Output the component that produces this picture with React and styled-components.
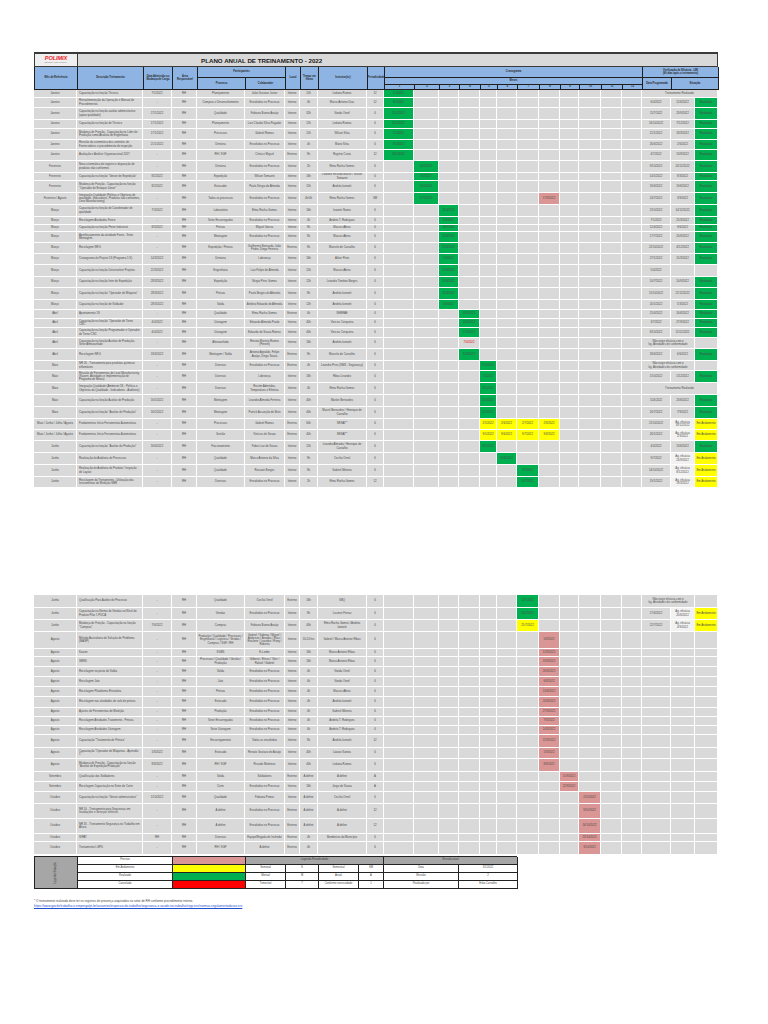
import React from "react";
import styled, { createGlobalStyle } from "styled-components";

const COLS =
  "43px 66px 29px 25px 48px 40px 15px 18px 49px 17px 30px 25px 20px 21px 17px 20px 22px 21px 19px 22px 21px 20px 29px 24px 23px";

const FILL = { g: "#00b050", y: "#ffff00", p: "#da9694", r: "#d9d9d9" };
const MONTHS = [1, 2, 3, 4, 5, 6, 7, 8, 9, 10, 11, 12];

// [mês, descrição, data, processo, colaborador, local, horas, instrutor, periodicidade, altura, meses, situação]
const PAGE1 = [
  ["Janeiro", "Capacitação na função Técnica", "7/1/2022", "Planejamento", "João Gustavo Junior", "Interno", "12h", "Ledana Ramos", "12", 8, "1g", "T"],
  ["Janeiro", "Retroalimentação da Operação e Manual de Procedimentos", "-", "Compras e Desenvolvimento", "Envolvidos no Processo", "Interno", "4h", "Marco Antonio Dias", "12", 10, "1g", "R"],
  ["Janeiro", "Capacitação na função auxiliar administrativo (apoio qualidade)", "17/1/2022", "Qualidade", "Fabiana Bueno Araújo", "Interno", "32h", "Vanda Ornel", "6", 12, "1g", "R"],
  ["Janeiro", "Capacitação na função de Técnico", "17/1/2022", "Planejamento", "Luiz Cláudio Silva Pagador", "Interno", "12h", "Ledana Ramos", "6", 9, "1g", "R"],
  ["Janeiro", "Mudança de Função - Capacitação no Líder de Produção como Analista de Engenharia", "17/1/2022", "Processos", "Gabriel Ramos", "Interno", "12h", "Wilson Silva", "6", 11, "1g", "R"],
  ["Janeiro", "Revisão da sistemática dos controles de Fornecedores e procedimento de inspeção", "21/1/2022", "Diretoria", "Envolvidos no Processo", "Interno", "4h", "Mario Silva", "6", 10, "1g", "R"],
  ["Janeiro", "Avaliação e Análise Organizacional 2017", "-", "RH / SGF", "Cíntia e Miguel", "Externo", "8h", "Rogério Costa", "12", 11, "1g", "R"],
  ["Fevereiro", "Nova sistemática de registro e disposição de produtos não conformes", "-", "Diretoria", "Envolvidos no Processo", "Interno", "2h", "Elma Rocha Gomes", "6", 12, "2g", "R"],
  ["Fevereiro", "Capacitação na função \"Gestor de Expedição\"", "8/2/2022", "Expedição", "Wilson Tomazini", "Interno", "16h", "Leandro Ricardo Maciel / Wilson Tomazini", "6", 8, "2g", "R"],
  ["Fevereiro", "Mudança de Função - Capacitação na função \"Operador de Estoque Júnior\"", "8/2/2022", "Estocador", "Paulo Sérgio de Almeida", "Interno", "12h", "Andréa Iannotti", "6", 12, "2g", "R"],
  ["Fevereiro / Agosto", "Integração Qualidade (Política e Objetivos de qualidade, Indicadores, Produtos não conformes, Lean Manufacturing)", "-", "Todos os processos", "Envolvidos no Processo", "Interno", "4h/4h", "Elma Rocha Gomes", "SM", 12, "2g8p", "R"],
  ["Março", "Capacitação na função de Coordenador de qualidade", "7/3/2022", "Laboratório", "Elma Rocha Gomes", "Interno", "16h", "Ivanete Nunes", "6", 12, "3g", "R"],
  ["Março", "Reciclagem Atividades Forno", "-", "Setor Encarregados", "Envolvidos no Processo", "Interno", "4h", "Andréa T. Rodrigues", "6", 8, "3g", "R"],
  ["Março", "Capacitação na função Pintor Industrial", "8/3/2022", "Pintura", "Miguel Garcia", "Interno", "8h", "Marcos Abreu", "6", 7, "3g", "R"],
  ["Março", "Aperfeiçoamento da atividade Forno - Setor Montagem", "-", "Montagem", "Envolvidos no Processo", "Interno", "8h", "Marcos Abreu", "6", 11, "3g", "R"],
  ["Março", "Reciclagem NR 6", "-", "Expedição / Pintura", "Guilherme Bernardo, João Pedro, Diego Ferreira", "Externo", "8h", "Marcelo de Carvalho", "6", 11, "3g", "R"],
  ["Março", "Cronograma do Projeto 5S (Programa 5 S)", "14/3/2022", "Diretoria", "Liderança", "Interno", "16h", "Ailton Pinto", "6", 11, "3g", "R"],
  ["Março", "Capacitação na função Desenvolver Projetos", "21/3/2022", "Engenharia", "Luiz Felipe de Almeida", "Interno", "12h", "Marcos Abreu", "6", 12, "3g", "D"],
  ["Março", "Capacitação na função Inter de Expedição", "28/3/2022", "Expedição", "Sérgio Pires Gomes", "Interno", "12h", "Leandro Timóteo Borges", "6", 11, "3g", "R"],
  ["Março", "Capacitação na função \"Operador de Máquina\"", "28/3/2022", "Pintura", "Paulo Borges de Almeida", "Interno", "8h", "Andréa Iannotti", "6", 12, "3g", "R"],
  ["Março", "Capacitação na função de Soldador", "28/3/2022", "Solda", "Antônio Eduardo de Almeida", "Interno", "12h", "Andréa Iannotti", "6", 10, "3g", "R"],
  ["Abril", "Apontamento 5S", "-", "Qualidade", "Elma Rocha Gomes", "Externo", "4h", "SEBRAE", "6", 9, "4g", "R"],
  ["Abril", "Capacitação na função \"Operador de Torno CNC\"", "4/4/2022", "Usinagem", "Eduardo Almeida Prado", "Interno", "40h", "Vinicius Cerqueira", "6", 9, "4g", "R"],
  ["Abril", "Capacitação na função Programador e Operador de Torno CNC", "4/4/2022", "Usinagem", "Eduardo de Souza Ramos", "Interno", "40h", "Vinicius Cerqueira", "6", 10, "4g", "R"],
  ["Abril", "Capacitação na função Auxiliar de Produção - Setor Almoxarifado", "-", "Almoxarifado", "Renata Moreira Ramos (Pierotti)", "Interno", "16h", "Andréa Iannotti", "6", 11, "4r", "N"],
  ["Abril", "Reciclagem NR 6", "18/4/2022", "Montagem / Solda", "Antonio Agnaldo, Felipe Araújo, Diego Souza", "Externo", "8h", "Marcelo de Carvalho", "6", 12, "4g", "R"],
  ["Maio", "NR 26 - Treinamento para produtos químicos inflamáveis", "-", "Diversos", "Envolvidos no Processo", "Externo", "4h", "Leandro Pires (SMS - Segurança)", "6", 10, "5g", "N"],
  ["Maio", "Revisão de Ferramentas de Lean Manufacturing (Kaizen, Atividades e Implementação de Programa de Metas)", "-", "Diversos", "Liderança", "Interno", "16h", "Ribas Leandro", "6", 12, "5g", "R"],
  ["Maio", "Integração Qualidade (Ambiente 5S - Política e Objetivos da Qualidade - Indicadores - Auditoria)", "-", "Diversos", "Recém Admitidos, Temporários e Efetivos", "Interno", "4h", "Elma Rocha Gomes", "6", 12, "5g", "T"],
  ["Maio", "Capacitação na função Auxiliar de Produção", "16/5/2022", "Montagem", "Leandro Almeida Ferreira", "Interno", "40h", "Marlon Bernardes", "6", 12, "5g", "R"],
  ["Maio", "Capacitação na função \"Auxiliar de Produção\"", "16/5/2022", "Montagem", "Patrick Assunção de Brito", "Interno", "40h", "Maciel Bernardes / Henrique de Carvalho", "6", 12, "5g", "R"],
  ["Maio / Junho / Julho / Agosto", "Fundamentos Início Ferramentas Automotivas", "-", "Processos", "Gabriel Ramos", "Externo", "60h", "SENAI**", "6", 11, "5y6y7y8y", "A"],
  ["Maio / Junho / Julho / Agosto", "Fundamentos Início Ferramentas Automotivas", "-", "Gestão", "Vinícius de Souza", "Externo", "40h", "SENAI**", "6", 11, "5y6y7y8y", "A"],
  ["Junho", "Capacitação na função \"Auxiliar de Produção\"", "16/6/2022", "Fracionamento", "Fabio Luiz de Souza", "Interno", "12h", "Leandro Almeida / Henrique de Carvalho", "6", 12, "5g", "R"],
  ["Junho", "Realização de Auditoria de Processos", "-", "Qualidade", "Marco Antonio da Silva", "Interno", "8h", "Cecília Ornel", "6", 12, "6g", "A"],
  ["Junho", "Realização de Auditoria de Produto / Inspeção de Layout", "-", "Qualidade", "Rosiane Borges", "Interno", "8h", "Gabriel Moreira", "6", 12, "7g", "A"],
  ["Junho", "Reciclagem do Treinamento - Utilização dos Instrumentos de Medição NBR", "-", "Diversos", "Envolvidos no Processo", "Interno", "2h", "Elma Rocha Gomes", "12", 11, "7g", "A"],
];

const PAGE2 = [
  ["Junho", "Qualificação Para Auditor de Processo", "-", "Qualidade", "Cecília Ornel", "Externo", "16h", "SBQ", "6", 13, "7g", "N"],
  ["Junho", "Capacitação na Norma de Vendas no Nível do Produto Pilar 1 PDCA", "-", "Vendas", "Envolvidos no Processo", "Interno", "8h", "Luciene Ferraz", "6", 12, "7g", "A"],
  ["Junho", "Mudança de Função - Capacitação na função \"Compras\"", "7/6/2022", "Compras", "Fabiana Bueno Araújo", "Interno", "40h", "Elma Rocha Gomes / Andréa Iannotti", "6", 12, "7y", "A"],
  ["Agosto", "Método Australiano de Solução de Problema (MASP)", "-", "Produção / Qualidade / Processos / Engenharia / Logística / Vendas / Compras / SGF / RH", "Gabriel / Sabrina / Miguel / Anderson / Ariadna / Elias / Rosilene / Leandro / Rony / Roberta", "Interno", "16-20 hrs", "Gabriel / Marco Antonio Ribas", "6", 17, "8p", ""],
  ["Agosto", "Kaizen", "-", "SGBS", "E-Ledim", "Interno", "16h", "Marco Antonio Ribas", "6", 8, "8p", ""],
  ["Agosto", "SMED", "-", "Processos / Qualidade / Gestão / Produção", "Gilberto / Eliseu / Vitor / Rafael / Gabriel", "Interno", "16h", "Marco Antonio Ribas", "6", 10, "8p", ""],
  ["Agosto", "Reciclagem no posto de Solda", "-", "Solda", "Envolvidos no Processo", "Interno", "4h", "Vanda Ornel", "6", 10, "8p", ""],
  ["Agosto", "Reciclagem Jato", "-", "Jato", "Envolvidos no Processo", "Interno", "4h", "Vanda Ornel", "6", 10, "8p", ""],
  ["Agosto", "Reciclagem Plataforma Elevatória", "-", "Pintura", "Envolvidos no Processo", "Interno", "4h", "Marcos Abreu", "6", 10, "8p", ""],
  ["Agosto", "Reciclagem nas atividades de solo de pintura", "-", "Estocado", "Envolvidos no Processo", "Interno", "4h", "Andréa Iannotti", "6", 11, "8p", ""],
  ["Agosto", "Ajustes de Ferramentas de Medição", "-", "Produção", "Envolvidos no Processo", "Interno", "4h", "Gabriel Moreira", "6", 9, "8p", ""],
  ["Agosto", "Reciclagem Atividades Tratamento - Pintura", "-", "Setor Encarregados", "Envolvidos no Processo", "Interno", "4h", "Andréa T. Rodrigues", "6", 9, "8p", ""],
  ["Agosto", "Reciclagem Atividades Usinagem", "-", "Setor Usinagem", "Envolvidos no Processo", "Interno", "4h", "Andréa T. Rodrigues", "6", 9, "8p", ""],
  ["Agosto", "Capacitação \"Tratamento de Pintura\"", "-", "Encarregamento", "Todos os envolvidos", "Interno", "8h", "Andréa Iannotti", "12", 13, "8p", ""],
  ["Agosto", "Capacitação \"Operador de Máquinas - Aprendiz 1\"", "1/8/2022", "Estocado", "Renato Gustavo de Araújo", "Interno", "40h", "Lázaro Santos", "6", 11, "8p", ""],
  ["Agosto", "Mudança de Função - Capacitação na função \"Auxiliar de Expedição/Produção\"", "8/8/2022", "RH / SGF", "Ricardo Medeiros", "Interno", "40h", "Ledana Ramos", "6", 13, "8p", ""],
  ["Setembro", "Qualificação dos Soldadores", "-", "Solda", "Soldadores", "Externo", "A definir", "A definir", "A", 10, "9p", ""],
  ["Setembro", "Reciclagem Capacitação no Setor de Corte", "-", "Corte", "Envolvidos no Processo", "Interno", "16h", "Jorge de Souza", "A", 10, "9p", ""],
  ["Outubro", "Capacitação na função \"Gestor administrativo\"", "1/10/2022", "Qualidade", "Fabiana Pomar", "Interno", "A definir", "Cecília Ornel", "6", 12, "10p", ""],
  ["Outubro", "NR 10 - Treinamento para Segurança em Instalações e Serviços elétricos", "-", "A definir", "Envolvidos no Processo", "Externo", "A definir", "A definir", "12", 15, "10p", ""],
  ["Outubro", "NR 35 - Treinamento Segurança no Trabalho em Altura", "-", "A definir", "Envolvidos no Processo", "Externo", "A definir", "A definir", "12", 15, "10p", ""],
  ["Outubro", "SIPAT", "RH", "Diversos", "Equipe/Brigada de Incêndio", "Externo", "4h", "Bombeiros do Município", "6", 8, "10p", ""],
  ["Outubro", "Treinamento LGPD", "-", "RH / SGF", "A definir", "Externo", "4h", "", "6", 13, "10p", ""],
];

const GlobalStyle = createGlobalStyle`
  * { box-sizing: border-box; }
  body {
    margin: 0;
    background: #fff;
    font-family: "Liberation Sans", Arial, sans-serif;
  }
`;

const Page = styled.div`
  width: 768px;
  padding: 52px 0 60px 34px;
`;

const Sheet = styled.div`
  width: 684px;
  margin-top: ${(p) => p.$top || 0}px;
`;

const TitleRow = styled.div`
  display: grid;
  grid-template-columns: 43px 1fr;
  height: 15px;
  border: 1px solid #3a3a3a;
  border-top-width: 2px;
`;

const Logo = styled.div`
  background: #efefef;
  border-right: 1px solid #3a3a3a;
  display: flex;
  flex-direction: column;
  align-items: center;
  justify-content: center;
  line-height: 1;
`;

const LogoMark = styled.span`
  color: #e8262b;
  font-weight: 900;
  font-style: italic;
  font-size: 5.6px;
  letter-spacing: -0.1px;
`;

const LogoSub = styled.span`
  color: #777;
  font-size: 1.8px;
  margin-top: 1px;
`;

const Title = styled.div`
  background: #d9d9d9;
  display: flex;
  align-items: center;
  padding-left: 123px;
  font-size: 6.2px;
  font-weight: bold;
  color: #1a1a1a;
`;

const Head = styled.div`
  display: grid;
  grid-template-columns: ${COLS};
  grid-template-rows: 11px 7px 5px;
  border-left: 1px solid #1f1f1f;
`;

const HCell = styled.div`
  grid-column: ${(p) => p.$c};
  grid-row: ${(p) => p.$r || "1 / 4"};
  background: #8db4e2;
  border-right: 1px solid #1f1f1f;
  border-bottom: 1px solid #1f1f1f;
  display: flex;
  align-items: center;
  justify-content: center;
  text-align: center;
  font-size: 2.6px;
  font-weight: bold;
  line-height: 1.2;
  color: #2a2a2a;
  padding: 0 1px;
`;

const Row = styled.div`
  display: grid;
  grid-template-columns: ${COLS};
  height: ${(p) => p.$h}px;
  border-bottom: 1px solid #fff;
`;

const Cell = styled.div`
  grid-column: span ${(p) => p.$span || 1};
  background: ${(p) => p.$bg || "#d9d9d9"};
  border-right: 1px solid #fff;
  display: flex;
  align-items: center;
  justify-content: ${(p) => (p.$left ? "flex-start" : "center")};
  text-align: ${(p) => (p.$left ? "left" : "center")};
  padding: 0 ${(p) => (p.$left ? 2 : 1)}px;
  font-size: 2.8px;
  line-height: 1.12;
  color: ${(p) => (p.$red ? "#e00000" : "#4a4a4a")};
  overflow: hidden;
`;

const Legend = styled.div`
  display: grid;
  grid-template-columns: 43px 95px 73px 40px 33px 40px 25px 75px 59px;
  grid-template-rows: repeat(4, 8px);
  width: 483px;
  margin-top: 1px;
  border-top: 1px solid #222;
  border-left: 1px solid #222;
`;

const LCell = styled.div`
  grid-column: ${(p) => p.$c};
  grid-row: ${(p) => p.$r};
  background: ${(p) => p.$bg || "#fff"};
  border-right: 1px solid #222;
  border-bottom: 1px solid #222;
  display: flex;
  align-items: center;
  justify-content: center;
  text-align: center;
  font-size: 2.7px;
  line-height: 1.1;
  color: #444;
`;

const Side = styled(LCell)`
  background: #a6a6a6;
`;

const SideText = styled.span`
  writing-mode: vertical-rl;
  transform: rotate(180deg);
  font-size: 2.7px;
  color: #444;
`;

const Note = styled.p`
  margin: 10px 0 0;
  font-size: 3px;
  color: #444;
`;

const Link = styled.a`
  display: block;
  margin-top: 1px;
  font-size: 3.2px;
  color: #1f4fd1;
  text-decoration: underline;
`;

function parseMonths(s) {
  const map = {};
  for (const [, m, c] of s.matchAll(/(\d+)([gypr])/g)) map[m] = c;
  return map;
}

function Status({ kind, idx }) {
  const a = `${((idx * 5) % 27) + 1}/${((idx * 3) % 12) + 1}/2022`;
  const b = `${((idx * 11) % 27) + 1}/${((idx * 3 + 2) % 12) + 1}/2022`;
  if (kind === "T") return <Cell $span={3}>Treinamento Realizado</Cell>;
  if (kind === "N")
    return (
      <>
        <Cell $span={2}>
          Não exige eficácia com o<br />kg. Atividades de conformidade
        </Cell>
        <Cell />
      </>
    );
  if (kind === "R")
    return (
      <>
        <Cell>{a}</Cell>
        <Cell>{b}</Cell>
        <Cell $bg={FILL.g}>Realizado</Cell>
      </>
    );
  if (kind === "A")
    return (
      <>
        <Cell>{a}</Cell>
        <Cell $bg="#f2f2f2">
          Ag. eficácia
          <br />
          {b}
        </Cell>
        <Cell $bg={FILL.y}>Em Andamento</Cell>
      </>
    );
  if (kind === "D")
    return (
      <>
        <Cell>{a}</Cell>
        <Cell />
        <Cell />
      </>
    );
  return (
    <>
      <Cell />
      <Cell />
      <Cell />
    </>
  );
}

function PlanRow({ row, idx }) {
  const [mes, desc, nec, proc, colab, local, horas, inst, per, h, ms, st] = row;
  const map = parseMonths(ms);
  return (
    <Row $h={h}>
      <Cell>{mes}</Cell>
      <Cell $left>{desc}</Cell>
      <Cell>{nec}</Cell>
      <Cell>RH</Cell>
      <Cell>{proc}</Cell>
      <Cell>{colab}</Cell>
      <Cell>{local}</Cell>
      <Cell>{horas}</Cell>
      <Cell>{inst}</Cell>
      <Cell>{per}</Cell>
      {MONTHS.map((m) => {
        const c = map[m];
        return (
          <Cell key={m} $bg={c ? FILL[c] : undefined} $red={c === "r"}>
            {c ? `${((idx * 7) % 27) + 1}/${m}/2022` : ""}
          </Cell>
        );
      })}
      <Status kind={st} idx={idx} />
    </Row>
  );
}

function Header() {
  return (
    <Head>
      <HCell $c="1">Mês de Referência</HCell>
      <HCell $c="2">Descrição Treinamento</HCell>
      <HCell $c="3">Data Admissão ou Mudança de Cargo</HCell>
      <HCell $c="4">Área Responsável</HCell>
      <HCell $c="5 / 7" $r="1">Participantes</HCell>
      <HCell $c="5" $r="2 / 4">Processo</HCell>
      <HCell $c="6" $r="2 / 4">Colaborador</HCell>
      <HCell $c="7">Local</HCell>
      <HCell $c="8">Tempo em Horas</HCell>
      <HCell $c="9">Instrutor(es)</HCell>
      <HCell $c="10">Periodicidade</HCell>
      <HCell $c="11 / 23" $r="1">Cronograma</HCell>
      <HCell $c="11 / 23" $r="2">Meses</HCell>
      {MONTHS.map((m) => (
        <HCell key={m} $c={`${10 + m}`} $r="3">
          {m}
        </HCell>
      ))}
      <HCell $c="23 / 26" $r="1">
        Verificação de Eficácia - LMI
        <br />
        (90 dias após o treinamento)
      </HCell>
      <HCell $c="23" $r="2 / 4">Data Programada</HCell>
      <HCell $c="24 / 26" $r="2 / 4">Situação</HCell>
    </Head>
  );
}

export default function App() {
  return (
    <>
      <GlobalStyle />
      <Page>
        <Sheet>
          <TitleRow>
            <Logo>
              <LogoMark>POLIMIX</LogoMark>
              <LogoSub>INDÚSTRIA METALÚRGICA</LogoSub>
            </Logo>
            <Title>PLANO ANUAL DE TREINAMENTO - 2022</Title>
          </TitleRow>
          <Header />
          {PAGE1.map((r, i) => (
            <PlanRow key={i} row={r} idx={i} />
          ))}
        </Sheet>

        <Sheet $top={107}>
          {PAGE2.map((r, i) => (
            <PlanRow key={i} row={r} idx={i + 40} />
          ))}
        </Sheet>

        <Legend>
          <Side $c="1" $r="1 / 5">
            <SideText>Legenda Situação</SideText>
          </Side>
          <LCell $c="2" $r="1">Previsto</LCell>
          <LCell $c="3" $r="1" $bg={FILL.p} />
          <LCell $c="2" $r="2">Em Andamento</LCell>
          <LCell $c="3" $r="2" $bg={FILL.y} />
          <LCell $c="2" $r="3">Realizado</LCell>
          <LCell $c="3" $r="3" $bg={FILL.g} />
          <LCell $c="2" $r="4">Cancelado</LCell>
          <LCell $c="3" $r="4" $bg="#ff0000" />

          <LCell $c="4 / 8" $r="1" $bg="#a6a6a6">Legenda Periodicidade</LCell>
          <LCell $c="4" $r="2">Semanal</LCell>
          <LCell $c="5" $r="2">S</LCell>
          <LCell $c="6" $r="2">Semestral</LCell>
          <LCell $c="7" $r="2">SM</LCell>
          <LCell $c="4" $r="3">Mensal</LCell>
          <LCell $c="5" $r="3">M</LCell>
          <LCell $c="6" $r="3">Anual</LCell>
          <LCell $c="7" $r="3">A</LCell>
          <LCell $c="4" $r="4">Trimestral</LCell>
          <LCell $c="5" $r="4">T</LCell>
          <LCell $c="6" $r="4">Conforme necessidade</LCell>
          <LCell $c="7" $r="4">1</LCell>

          <LCell $c="8 / 10" $r="1" $bg="#a6a6a6">Revisão atual</LCell>
          <LCell $c="8" $r="2">Data</LCell>
          <LCell $c="9" $r="2">3/1/2022</LCell>
          <LCell $c="8" $r="3">Revisão</LCell>
          <LCell $c="9" $r="3">2</LCell>
          <LCell $c="8" $r="4">Realizado por</LCell>
          <LCell $c="9" $r="4">Érika Carvalho</LCell>
        </Legend>

        <Note>* O treinamento realizado deve ter os registros de presença arquivados no setor de RH conforme procedimento interno.</Note>
        <Link href="#">
          https://www.gov.br/trabalho-e-emprego/pt-br/assuntos/inspecao-do-trabalho/seguranca-e-saude-no-trabalho/ctpp-nrs/normas-regulamentadoras-nrs
        </Link>
      </Page>
    </>
  );
}
